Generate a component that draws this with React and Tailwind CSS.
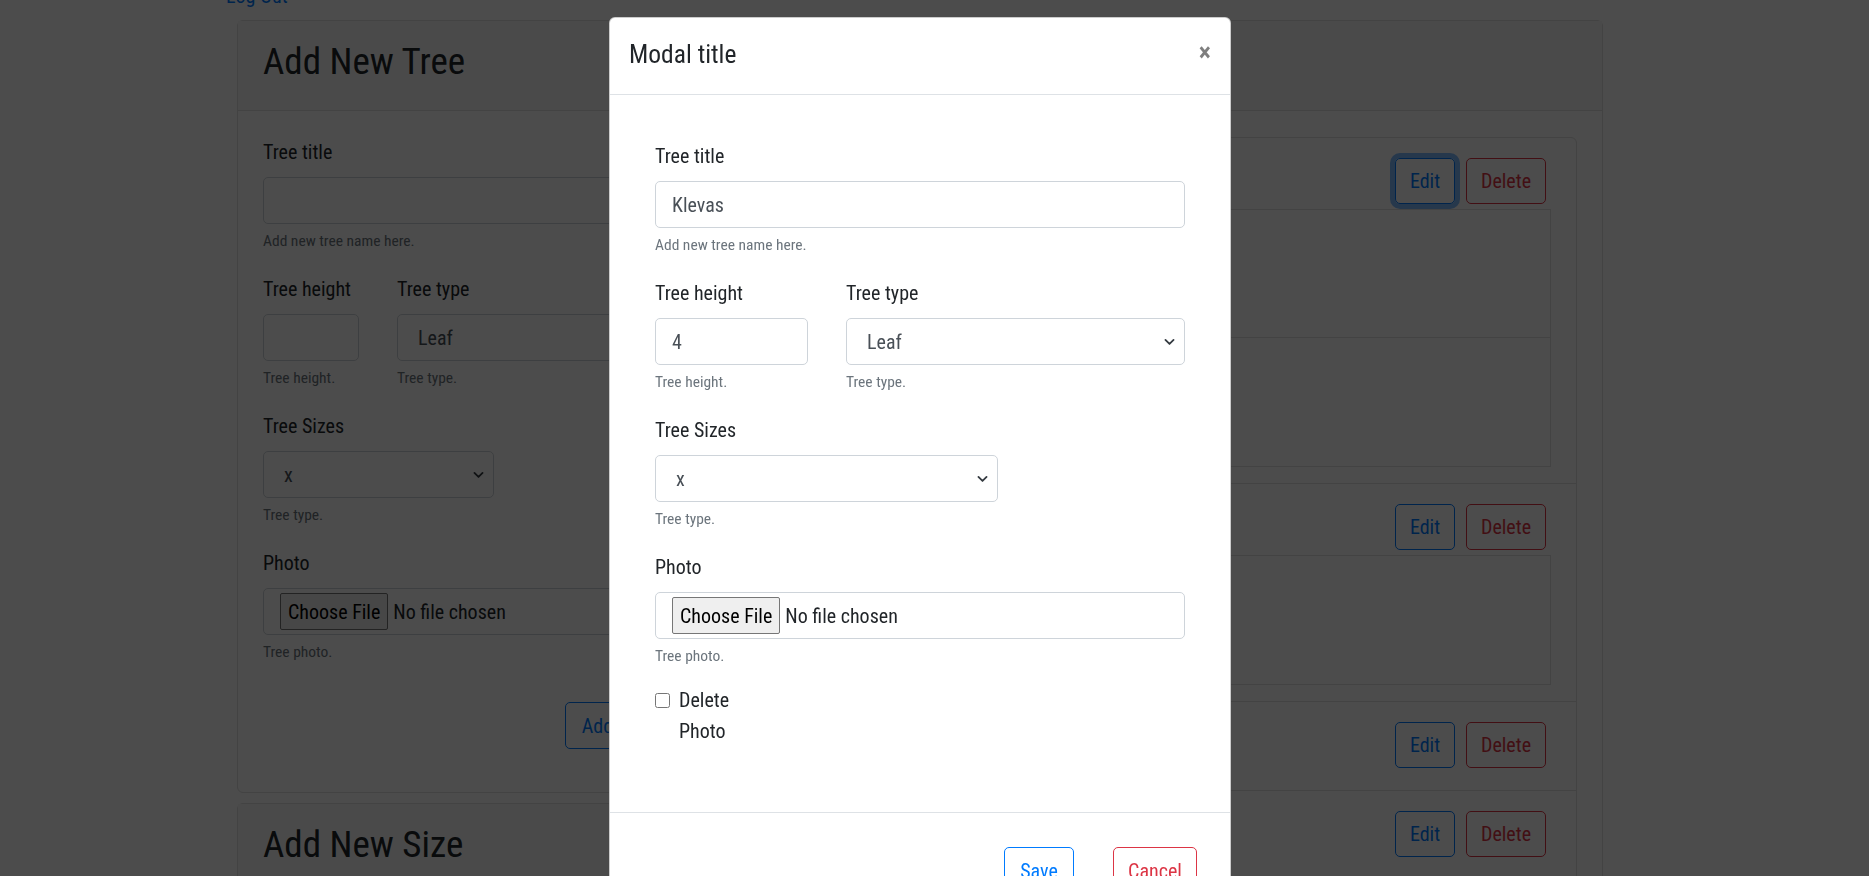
import React from "react";

const Label = ({ children, className = "" }) => (
  <div className={`text-[20px] leading-[30px] mb-[10px] ${className}`}>{children}</div>
);

const Help = ({ children }) => (
  <div className="mt-[5px] text-[15.5px] leading-[25px] text-[#6c757d]">{children}</div>
);

const TextBox = ({ value = "", className = "" }) => (
  <div
    className={`h-[47px] flex items-center px-[16px] border border-[#ced4da] rounded-[5px] bg-white text-[20px] text-[#495057] ${className}`}
  >
    {value}
  </div>
);

const Chevron = () => (
  <svg width="13" height="13" viewBox="0 0 16 16" fill="none">
    <path d="M3 6l5 5 5-5" stroke="#343a40" strokeWidth="2.2" strokeLinecap="round" strokeLinejoin="round" />
  </svg>
);

const SelectBox = ({ value, className = "" }) => (
  <div
    className={`h-[47px] flex items-center justify-between pl-[20px] pr-[8px] border border-[#ced4da] rounded-[5px] bg-white text-[20px] text-[#495057] ${className}`}
  >
    <span>{value}</span>
    <Chevron />
  </div>
);

const FileBox = () => (
  <div className="h-[47px] flex items-center px-[16px] border border-[#ced4da] rounded-[5px] bg-white text-[20px]">
    <span className="h-[37px] px-[7px] flex items-center bg-[#efefef] border border-[#767676] rounded-[2px] text-black">
      Choose File
    </span>
    <span className="ml-[5px] text-[#212529]">No file chosen</span>
  </div>
);

const OutlineBtn = ({ children, color = "blue", className = "" }) => (
  <button
    className={`h-[46px] rounded-[5px] border text-[20px] flex items-center justify-center ${
      color === "blue" ? "border-[#007bff] text-[#007bff]" : "border-[#dc3545] text-[#dc3545]"
    } ${className}`}
  >
    {children}
  </button>
);

function TreeForm({ narrow }) {
  return (
    <div>
      <div className="mb-[20px]">
        <Label>Tree title</Label>
        <TextBox value={narrow ? "" : "Klevas"} />
        <Help>Add new tree name here.</Help>
      </div>
      <div className="flex mb-[20px]">
        <div className={narrow ? "w-[96px]" : "w-[153px]"}>
          <Label className="whitespace-nowrap">Tree height</Label>
          <TextBox value={narrow ? "" : "4"} />
          <Help>Tree height.</Help>
        </div>
        <div className="flex-1 ml-[38px]">
          <Label>Tree type</Label>
          <SelectBox value="Leaf" />
          <Help>Tree type.</Help>
        </div>
      </div>
      <div className="mb-[20px]">
        <Label>Tree Sizes</Label>
        <SelectBox value="x" className={narrow ? "w-[231px]" : "w-[343px]"} />
        <Help>Tree type.</Help>
      </div>
      <div className="mb-[16px]">
        <Label>Photo</Label>
        <FileBox />
        <Help>Tree photo.</Help>
      </div>
    </div>
  );
}

function TreeItem({ rows, focused }) {
  return (
    <div className="border-b border-[#dfdfdf] last:border-b-0 pl-[25px] pr-[25px] pt-[20px] pb-[16px] min-h-[89px]">
      <div className="flex justify-end gap-[11px] pr-[5px]">
        <OutlineBtn
          className={`w-[60px] ${focused ? "shadow-[0_0_0_5px_rgba(0,123,255,0.5)]" : ""}`}
        >
          Edit
        </OutlineBtn>
        <OutlineBtn color="red" className="w-[80px]">
          Delete
        </OutlineBtn>
      </div>
      {rows > 0 && (
        <div className="mt-[5px] border border-[#dfdfdf]">
          {Array.from({ length: rows }).map((_, i) => (
            <div key={i} className="h-[128px] border-b border-[#dfdfdf] last:border-b-0" />
          ))}
        </div>
      )}
    </div>
  );
}

export default function App() {
  return (
    <div className="relative min-h-screen overflow-hidden bg-white text-[#212529] font-['Roboto','Liberation_Sans',sans-serif] [font-stretch:75%]">
      {/* page behind the modal */}
      <div className="mt-[-19px] pl-[226px] text-[20px] leading-[31px] text-[#007bff]">Log Out</div>
      <div className="flex gap-[38px] ml-[237px] w-[1366px] mt-[8px]">
        <div className="w-[664px] shrink-0">
          <div className="border border-[#dfdfdf] rounded-[6px]">
            <div className="h-[90px] flex items-center pb-[8px] px-[25px] bg-[#f7f7f7] border-b border-[#dfdfdf]">
              <h3 className="text-[37px] leading-[43px]">Add New Tree</h3>
            </div>
            <div className="px-[25px] pt-[26px] pb-[43px]">
              <TreeForm narrow />
              <div className="mt-[37px] pl-[302px]">
                <OutlineBtn className="w-[100px] h-[47px]">Add tree</OutlineBtn>
              </div>
            </div>
          </div>
          <div className="mt-[10px] border border-[#dfdfdf] rounded-[6px]">
            <div className="h-[90px] flex items-center pb-[8px] px-[25px] bg-[#f7f7f7] border-b border-[#dfdfdf]">
              <h3 className="text-[37px] leading-[43px]">Add New Size</h3>
            </div>
            <div className="h-[200px]" />
          </div>
        </div>
        <div className="flex-1">
          <div className="border border-[#dfdfdf] rounded-[6px]">
            <div className="h-[90px] flex items-center pb-[8px] px-[25px] bg-[#f7f7f7] border-b border-[#dfdfdf]">
              <h3 className="text-[37px] leading-[43px]">Trees</h3>
            </div>
            <div className="px-[25px] pt-[26px] pb-[25px]">
              <div className="border border-[#dfdfdf] rounded-[6px]">
                <TreeItem rows={2} focused />
                <TreeItem rows={1} />
                <TreeItem rows={0} />
                <TreeItem rows={0} />
                <TreeItem rows={0} />
              </div>
            </div>
          </div>
        </div>
      </div>

      {/* backdrop */}
      <div className="fixed inset-0 bg-black/70" />

      {/* modal */}
      <div className="fixed inset-0 pl-[609px] pt-[17px]">
        <div className="w-[622px] bg-white rounded-[6px] border border-black/20 text-[#212529]">
          <div className="h-[77px] flex items-start justify-between pl-[19px] pr-[19px] pt-[18px] border-b border-[#dee2e6]">
            <h5 className="text-[25.5px] leading-[37px]">Modal title</h5>
            <button className="mt-[1px] text-[26px] leading-[30px] font-bold text-black opacity-50">×</button>
          </div>
          <div className="px-[45px] pt-[46px] pb-[45px]">
            <TreeForm />
            <div className="flex mb-[20px]">
              <input type="checkbox" className="mt-[8px] w-[15px] h-[15px]" readOnly />
              <span className="ml-[9px] w-[50px] text-[20px] leading-[31px]">Delete Photo</span>
            </div>
          </div>
          <div className="border-t border-[#dee2e6] pt-[34px] pb-[30px] pr-[33px] flex justify-end gap-[39px]">
            <OutlineBtn className="w-[70px] h-[47px]">Save</OutlineBtn>
            <OutlineBtn color="red" className="w-[84px] h-[47px]">
              Cancel
            </OutlineBtn>
          </div>
        </div>
      </div>
    </div>
  );
}
